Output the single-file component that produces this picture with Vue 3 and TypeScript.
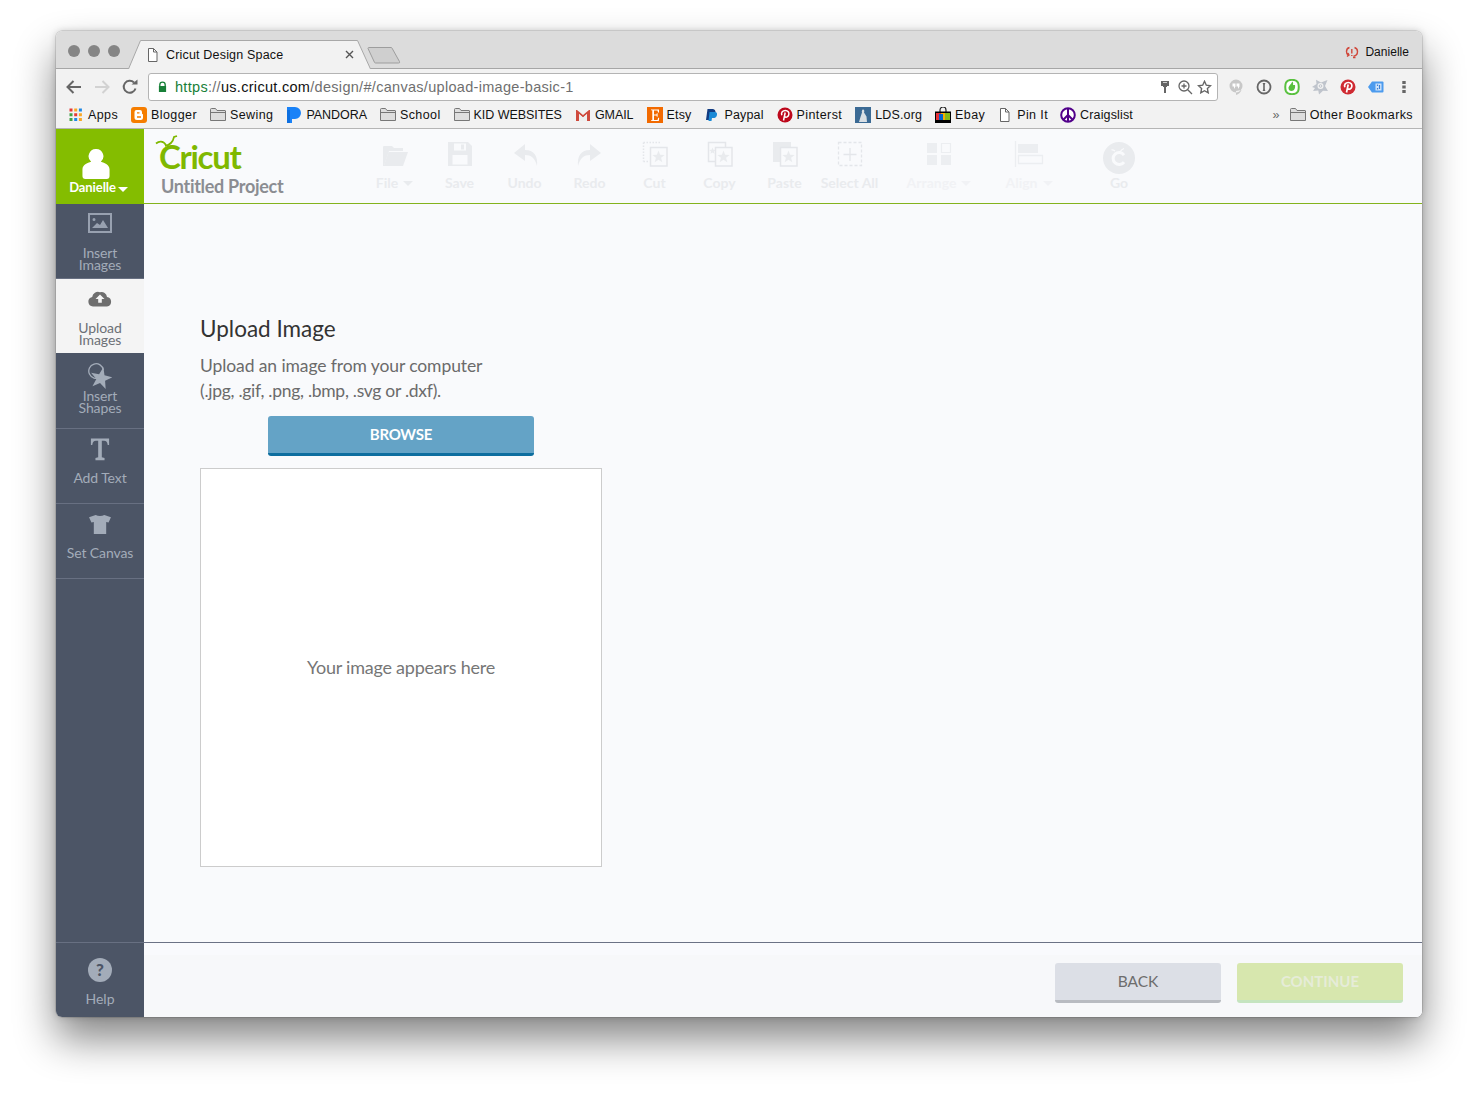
<script setup lang="ts">
interface P { d: string; fill?: string; stroke?: string; sw?: number; dash?: string }
interface Ic { w: number; h: number; box: string; p: P[] }

const rect = (x: number, y: number, w: number, h: number) => `M${x} ${y}h${w}v${h}h${-w}z`
const circ = (cx: number, cy: number, r: number) => `M${cx - r} ${cy}a${r} ${r} 0 1 0 ${2 * r} 0a${r} ${r} 0 1 0 ${-2 * r} 0z`
const starPath = (cx: number, cy: number, R: number, r: number, rot = 0) => {
  const pts: string[] = []
  for (let i = 0; i < 10; i++) {
    const a = ((-90 + rot + i * 36) * Math.PI) / 180
    const q = i % 2 ? r : R
    pts.push(`${(cx + q * Math.cos(a)).toFixed(2)} ${(cy + q * Math.sin(a)).toFixed(2)}`)
  }
  return 'M' + pts.join('L') + 'z'
}

const folderPaths: P[] = [{ d: 'M.5 13.500V2.500a1 1 0 0 1 1-1h4l1.500 2h8a.5.5 0 0 1 .5.5v9.500z', fill: '#dedede', stroke: '#777', sw: 1 }, { d: 'M.5 5.500h15.500', stroke: '#777', sw: 1 }]
const docPaths: P[] = [{ d: 'M1.500.5h5l3.500 3.500v9.500h-8.500z', fill: '#fff', stroke: '#666', sw: 1 }, { d: 'M6.500.5v3.500h3.500', fill: 'none', stroke: '#666', sw: 1 }]

const s16 = (p: P[]): Ic => ({ w: 16, h: 16, box: '0 0 16 16', p })

const appColors = ['#e53935', '#f9a825', '#1e88e5', '#43a047', '#e53935', '#f9a825', '#43a047', '#1e88e5', '#f9a825']
const appsIcon = s16(appColors.map((c, i) => ({ d: rect(1.500 + (i % 3) * 4.700, 1.500 + Math.floor(i / 3) * 4.700, 3, 3), fill: c })))

const bookmarks: { label: string; icon: Ic; cls?: string }[] = [
  { label: 'Apps', icon: appsIcon },
  { label: 'Blogger', icon: s16([{ d: 'M3 0h10a3 3 0 0 1 3 3v10a3 3 0 0 1-3 3H3a3 3 0 0 1-3-3V3a3 3 0 0 1 3-3z', fill: '#f57d00' }, { d: 'M5.500 3h3.500a2 2 0 0 1 2 2v1.500a.7.7 0 0 0 .7.7h.3v3.300a2.500 2.500 0 0 1-2.500 2.500H6a2.500 2.500 0 0 1-2.500-2.500V5a2 2 0 0 1 2-2z', fill: '#fff' }, { d: 'M6 5.800h2.500M6 10h4', stroke: '#f57d00', sw: 1.300 }]) },
  { label: 'Sewing', icon: s16(folderPaths) },
  { label: 'PANDORA', cls: 'caps', icon: s16([{ d: 'M1 0h8a6 6 0 0 1 0 12H6v4H1z', fill: '#1a82f7' }, { d: 'M1 12V3h3v13H1z', fill: '#0d6fe0' }]) },
  { label: 'School', icon: s16(folderPaths) },
  { label: 'KID WEBSITES', cls: 'caps', icon: s16(folderPaths) },
  { label: 'GMAIL', cls: 'caps', icon: s16([{ d: 'M1 3v11h3V7l4 3.500L12 7v7h3V3h-1L8 8 2 3z', fill: '#cf4a3d' }, { d: 'M4 7l4 3.500L12 7v7H4z', fill: '#eeeeee' }]) },
  { label: 'Etsy', cls: 'tight', icon: s16([{ d: rect(0, 0, 16, 16), fill: '#f26a00' }, { d: 'M4 2.500h8v3h-1l-.5-2H7v4h2.500l.3-1.300h.8v3.600h-.8l-.3-1.300H7v4.500h3.500l.7-2.200h1L11.800 14H4v-.8h1.300V3.300H4z', fill: '#fff' }]) },
  { label: 'Paypal', cls: 'tight', icon: s16([{ d: 'M3.500 2h5a3 3 0 0 1 3 3.500C11 8 9 9 7 9H5.500L5 13H2z', fill: '#123c82' }, { d: 'M5.500 5h5.500a2.500 2.500 0 0 1 2 3c-.5 2.500-2 3-4 3H8l-.5 3h-3z', fill: '#1b8ad6' }]) },
  { label: 'Pinterst', icon: s16([{ d: circ(8, 8, 7.500), fill: '#bd081c' }, { d: 'M6.500 13.500l1.700-8M4.800 8.200c-1-2.700 1-4.700 3.500-4.700 2.700 0 4 1.900 3.500 4.100-.4 2.200-2.600 3.400-4.200 2', fill: 'none', stroke: '#fff', sw: 1.500 }]) },
  { label: 'LDS.org', cls: 'tight', icon: s16([{ d: rect(0, 0, 16, 16), fill: '#3b6a94' }, { d: 'M8 2.500c1.500 0 1.500 2 1 3l2.500 4L12 15H4l1.500-5L7 5.500c-.5-1 0-3 1-3z', fill: '#d9dfe4' }]) },
  { label: 'Ebay', icon: s16([{ d: 'M5 5V3a3 3 0 0 1 6 0v2', fill: 'none', stroke: '#222', sw: 1.200 }, { d: rect(0, 4.500, 16, 11.500), fill: '#000' }, { d: rect(1, 6, 5, 7), fill: '#e53238' }, { d: rect(6, 6, 4, 7), fill: '#f5af02' }, { d: rect(10, 6, 5, 7), fill: '#86b817' }, { d: rect(4, 7, 4, 6), fill: '#0064d2' }]) },
  { label: 'Pin It', cls: 'pin', icon: { w: 11, h: 14, box: '0 0 11 14', p: docPaths } },
  { label: 'Craigslist', cls: 'tight', icon: s16([{ d: circ(8, 8, 6.800), fill: '#fff', stroke: '#51008a', sw: 2 }, { d: 'M8 1.500v13M8 8l-4.700 4.700M8 8l4.700 4.700', fill: 'none', stroke: '#51008a', sw: 2 }]) },
]
const otherIcon = s16(folderPaths)

const ext: Ic[] = [
  s16([{ d: circ(8, 7, 6.500) + 'M8 12v4c2.500-.8 4.500-2.500 5.500-5z', fill: '#c8c8c8' }, { d: 'M4.500 4.500h3v3l-1.500 2.500V7.500H4.500zM8.500 4.500h3v3l-1.500 2.500V7.500H8.500z', fill: '#fff' }]),
  s16([{ d: circ(8, 8, 6.500), fill: 'none', stroke: '#666', sw: 1.800 }, { d: 'M6.800 4h2.400v1l-.4.400v5.200l.4.400v1H6.800v-1l.4-.4V5.400l-.4-.4z', fill: '#666' }]),
  s16([{ d: 'M8 .8c3 0 4.800.8 6 2.800 1 2 1 6.800 0 8.800-1.200 2-3 2.800-6 2.800s-4.800-.8-6-2.800c-1-2-1-6.800 0-8.800C3.200 1.600 5 .8 8 .8z', fill: '#fff', stroke: '#59c13f', sw: 2 }, { d: 'M4.500 9c0-2 2.200-3 3.800-6.500 1 1 1 2.500.7 3.500h2c.5 2.500-.5 6-3.500 6-2 0-3-1.300-3-3z', fill: '#59c13f' }]),
  s16([{ d: 'M0 8l4.500-3L4 .8l5 2.700L15.500 1 13 7l3 5-5-.3L7 15.500 6.300 11.500 1 12l2-3z', fill: '#bfc4cc' }, { d: circ(8.500, 7, 3), fill: '#f2f2f2' }, { d: circ(8.500, 7, 1.300), fill: 'none', stroke: '#bfc4cc', sw: 1 }]),
  s16([{ d: circ(8, 8, 7.500), fill: '#cf2a32' }, { d: 'M6.500 13.500l1.700-8M4.800 8.200c-1-2.700 1-4.700 3.500-4.700 2.700 0 4 1.900 3.500 4.100-.4 2.200-2.600 3.400-4.200 2', fill: 'none', stroke: '#fff', sw: 1.700 }]),
  s16([{ d: 'M4 2.500h10.500a1 1 0 0 1 1 1v9a1 1 0 0 1-1 1H4L0 8z', fill: '#4c9bee' }, { d: rect(7.500, 4.500, 6, 7), fill: '#cfe3fa' }, { d: 'M9.500 5.500v1.500M9.500 9v1.500M11.500 6v4', stroke: '#3b82d8', sw: 1.200 }]),
]

const faint = '#e9ebee'
const faintLine = '#e4e6ea'
const bg = '#f9fafc'
const star = starPath(20.500, 17, 6.500, 2.700)
const tb = (p: P[]): Ic => ({ w: 34, h: 28, box: '0 0 34 28', p })
const front: P = { d: rect(12.500, 7.500, 16.500, 18.500), fill: bg, stroke: faintLine, sw: 1.500 }

const tools: { label: string; caret?: boolean; cls?: string; icon: Ic }[] = [
  { label: 'File', caret: true, icon: tb([{ d: 'M5 7a1 1 0 0 1 1-1h8l2 2h9v3H11l-5 15H5z', fill: faint }, { d: 'M10.500 12H30l-5 14H5.800z', fill: faint }]) },
  { label: 'Save', icon: tb([{ d: 'M5 2h20l4 4v20H5zM11 3.500v7h12v-7zM18 4.500v5h3v-5zM9.500 15v9.500h15V15z', fill: faint }]) },
  { label: 'Undo', icon: tb([{ d: 'M17 4L6 13l11 8v-6c6 0 10 3 12 11 1-10-3-16-12-16z', fill: faint }]) },
  { label: 'Redo', icon: tb([{ d: 'M17 4l11 9-11 8v-6c-6 0-10 3-12 11-1-10 3-16 12-16z', fill: faint }]) },
  { label: 'Cut', icon: tb([{ d: 'M5.500 2.500h18M5.500 2.500v19M5.500 21.500h6', fill: 'none', stroke: faintLine, sw: 1.500, dash: '1.500 1.500' }, front, { d: star, fill: faint }]) },
  { label: 'Copy', icon: tb([{ d: rect(5.500, 2.500, 17, 19), fill: 'none', stroke: faintLine, sw: 1.500 }, { d: starPath(9.500, 11, 3.500, 1.500), fill: faint }, front, { d: star, fill: faint }]) },
  { label: 'Paste', icon: tb([{ d: rect(5, 2, 18, 20), fill: faint }, front, { d: star, fill: faint }]) },
  { label: 'Select All', icon: tb([{ d: rect(5.500, 2.500, 23, 23), fill: 'none', stroke: faintLine, sw: 1.300, dash: '3 2' }, { d: 'M17 8v13M10.500 14.500h13', stroke: faintLine, sw: 1.300 }]) },
  { label: 'Arrange', caret: true, cls: 'wide lighter gapl', icon: tb([{ d: rect(5, 3, 10, 10) + rect(5, 15, 10, 10) + rect(19, 15, 10, 10), fill: '#eceef1' }, { d: rect(19.500, 3.500, 9, 9), fill: 'none', stroke: '#eceef1', sw: 1.200 }]) },
  { label: 'Align', caret: true, cls: 'wide lighter', icon: tb([{ d: 'M3.500 1v26', stroke: '#eceef1', sw: 1.300 }, { d: rect(6, 4, 20, 9), fill: '#eceef1' }, { d: rect(6.500, 15.500, 24, 8), fill: 'none', stroke: '#eceef1', sw: 1.300 }]) },
]

const nav: { t: string[]; cls: string; icon: Ic }[] = [
  { t: ['Insert', 'Images'], cls: 'images', icon: { w: 24, h: 20, box: '0 0 24 20', p: [{ d: rect(1, 1, 22, 18), fill: 'none', stroke: '#98a1b0', sw: 2 }, { d: circ(6, 6.500, 1.500) + 'M4 15l5-5 3 2 3-5 5 8z', fill: '#98a1b0' }] } },
  { t: ['Upload', 'Images'], cls: 'active', icon: { w: 24, h: 18, box: '0 0 24 18', p: [{ d: 'M5 17.500a4.800 4.800 0 0 1-.8-9.500A5.800 5.800 0 0 1 12 3.200a5.500 5.500 0 0 1 7 4.800 4.800 4.800 0 0 1 0 9.500z', fill: '#6e6e6e' }, { d: 'M12 5.500l4.500 4.500h-2.700v3.800h-3.600V10H7.500z', fill: '#f4f4f4' }] } },
  { t: ['Insert', 'Shapes'], cls: 'shapes', icon: { w: 24, h: 28, box: '0 0 24 28', p: [{ d: 'M12 15.200A7.300 7.300 0 1 1 15.300 8', fill: 'none', stroke: '#a3acb9', sw: 1.300 }, { d: starPath(13, 16.500, 11.500, 4.700, 12), fill: '#a3acb9' }] } },
  { t: ['Add Text'], cls: 'text', icon: { w: 20, h: 24, box: '0 0 22 25', p: [{ d: 'M1 1h20v7h-1.500c-.5-3-1.500-4.500-4-4.500h-2.500v18l3 1V25H6v-2.500l3-1v-18H6.500c-2.500 0-3.500 1.500-4 4.500H1z', fill: '#a3acb9' }] } },
  { t: ['Set Canvas'], cls: 'canvas', icon: { w: 24, h: 20, box: '0 0 24 21', p: [{ d: 'M7.500 1c2.500 1.500 6.500 1.500 9 0l7 2.500-2.500 5.500-2.500-.5V21H5.500V8.500L3 9 .5 3.500z', fill: '#a3acb9' }] } },
]
</script>

<template>
  <div class="page">
    <div class="win">
      <div class="titlebar">
        <div class="lights"><i></i><i></i><i></i></div>
        <div class="tab">
          <svg class="tab-shape" width="244" height="29" viewBox="0 0 244 29"><path d="M.5 29L12.500.5h217l13 28.500" fill="#f2f2f2" stroke="#a8a8a8"/></svg>
          <svg class="tab-doc" width="11" height="14" viewBox="0 0 11 14"><path v-for="(p, i) in docPaths" :key="i" :d="p.d" :fill="p.fill" :stroke="p.stroke"/></svg>
          <span class="tab-title">Cricut Design Space</span>
          <svg class="tab-x" width="9" height="9" viewBox="0 0 9 9"><path d="M1 1l7 7M8 1L1 8" stroke="#555" stroke-width="1.400"/></svg>
        </div>
        <svg class="newtab" width="34" height="17" viewBox="0 0 34 17"><path d="M1 1.500a1 1 0 0 1 1-1h22a1 1 0 0 1 1 .6l7.500 13.500a1 1 0 0 1-1 1.400H8.500a1 1 0 0 1-1-.6z" fill="#cfcfcf" stroke="#9d9d9d"/></svg>
        <div class="profile">
          <svg width="14" height="13" viewBox="0 0 14 13"><path d="M4.500 1.500C2.500 2 1.500 3.500 1.500 5.500c0 1.500.6 2.600 1.500 3.400M2 10.500L4 9 3 7M9.500 1.500c2 .7 3 2.200 3 4 0 2.500-1.700 4.300-4 4.600M8 11.500h2.500M6.800 3v4.500M6.800 9v1" fill="none" stroke="#d0473a" stroke-width="1.400"/></svg>
          <span>Danielle</span>
        </div>
      </div>

      <div class="toolbar">
        <svg class="nav-b b1" width="16" height="14" viewBox="0 0 16 14"><path d="M15 7H2M7.500 1L1.500 7l6 6" fill="none" stroke="#666" stroke-width="2"/></svg>
        <svg class="nav-b b2" width="16" height="14" viewBox="0 0 16 14"><path d="M1 7h13M8.500 1l6 6-6 6" fill="none" stroke="#d2d2d2" stroke-width="2"/></svg>
        <svg class="nav-b b3" width="16" height="16" viewBox="0 0 16 16"><path d="M13.500 9.500A6 6 0 1 1 12 3.500" fill="none" stroke="#666" stroke-width="2"/><path d="M9.500 5.500h6v-5z" fill="#666"/></svg>
        <div class="omnibox">
          <svg width="9" height="12" viewBox="0 0 10 12"><path d="M2 5V3.500a3 3 0 0 1 6 0V5" fill="none" stroke="#188038" stroke-width="1.500"/><path d="M1 5h8v6.500H1z" fill="#188038"/></svg>
          <span class="url"><span class="g">https</span><span class="d">://</span><span class="b">us.cricut.com</span><span class="d">/design/#/canvas/upload-image-basic-1</span></span>
          <svg class="o1" width="10" height="14" viewBox="0 0 10 14"><path d="M1 1h8v5H7v1H6v6H4V7H3V6H1z" fill="#666"/><path d="M3 2.500h4" stroke="#ccc"/></svg>
          <svg class="o2" width="15" height="15" viewBox="0 0 15 15"><path d="M9.500 9.500L14 14M6 1a5 5 0 1 0 0 10A5 5 0 0 0 6 1zM3.500 6h5M6 3.500v5" fill="none" stroke="#666" stroke-width="1.300"/></svg>
          <svg class="o3" width="15" height="14" viewBox="0 0 15 14"><path d="M7.500 1.300l1.800 3.900 4.200.5-3.100 2.900.8 4.200-3.700-2.100-3.700 2.100.8-4.200-3.100-2.900 4.200-.5z" fill="none" stroke="#666" stroke-width="1.400"/></svg>
        </div>
        <div class="exts">
          <svg v-for="(e, i) in ext" :key="i" :width="e.w" :height="e.h" :viewBox="e.box"><path v-for="(p, j) in e.p" :key="j" :d="p.d" :fill="p.fill ?? 'none'" :stroke="p.stroke" :stroke-width="p.sw"/></svg>
          <svg class="dots" width="4" height="14" viewBox="0 0 4 14"><path d="M.3 1h3.400v3H.3zM.3 5.500h3.400v3H.3zM.3 10h3.400v3H.3z" fill="#666"/></svg>
        </div>
      </div>

      <div class="bookmarks">
        <div v-for="b in bookmarks" :key="b.label" class="bm" :class="b.cls">
          <svg :width="b.icon.w" :height="b.icon.h" :viewBox="b.icon.box"><path v-for="(p, j) in b.icon.p" :key="j" :d="p.d" :fill="p.fill ?? 'none'" :stroke="p.stroke" :stroke-width="p.sw"/></svg>
          <span>{{ b.label }}</span>
        </div>
        <span class="more">»</span>
        <div class="bm">
          <svg :width="otherIcon.w" :height="otherIcon.h" :viewBox="otherIcon.box"><path v-for="(p, j) in otherIcon.p" :key="j" :d="p.d" :fill="p.fill ?? 'none'" :stroke="p.stroke" :stroke-width="p.sw"/></svg>
          <span>Other Bookmarks</span>
        </div>
      </div>

      <div class="app">
        <aside class="side">
          <div class="user">
            <svg width="28" height="30" viewBox="0 0 28 31"><path d="M14 0a7.500 7.500 0 0 1 5 13.200c4 1.300 9 3 9 8V28a3 3 0 0 1-3 3H3a3 3 0 0 1-3-3v-6.800c0-5 5-6.700 9-8A7.500 7.500 0 0 1 14 0z" fill="#fff"/></svg>
            <div class="uname">Danielle<i class="caret"></i></div>
          </div>
          <div v-for="n in nav" :key="n.t[0] + n.t[1]" class="nav" :class="n.cls">
            <svg :width="n.icon.w" :height="n.icon.h" :viewBox="n.icon.box"><path v-for="(p, j) in n.icon.p" :key="j" :d="p.d" :fill="p.fill ?? 'none'" :stroke="p.stroke" :stroke-width="p.sw"/></svg>
            <div class="nl"><div v-for="l in n.t" :key="l">{{ l }}</div></div>
          </div>
          <div class="help">
            <div class="q">?</div>
            <div class="hl">Help</div>
          </div>
        </aside>

        <div class="main">
          <header class="head">
            <div class="brand">
              <div class="logo">
                <svg class="ant" width="30" height="20" viewBox="0 0 30 20"><path d="M1 8.500c3-2.500 7-3 10 1.500M10 11c5-1 8-4 9-9l3-1" fill="none" stroke="#7fb800" stroke-width="1.700"/></svg>
                <span>Cricut</span>
              </div>
              <div class="proj">Untitled Project</div>
            </div>
            <div class="tools">
              <div v-for="t in tools" :key="t.label" class="tool" :class="t.cls">
                <svg :width="t.icon.w" :height="t.icon.h" :viewBox="t.icon.box"><path v-for="(p, j) in t.icon.p" :key="j" :d="p.d" :fill="p.fill ?? 'none'" :stroke="p.stroke" :stroke-width="p.sw" :stroke-dasharray="p.dash"/></svg>
                <div class="tl">{{ t.label }}<i v-if="t.caret" class="tcaret"></i></div>
              </div>
              <div class="tool wide go">
                <svg width="32" height="32" viewBox="0 0 32 32"><circle cx="16" cy="16" r="16" fill="#e9ebee"/><path d="M21 13a6 6 0 1 0 0 7" fill="none" stroke="#f9fafc" stroke-width="3"/><path d="M12 9c-1.500-1-2.500-1.500-3.500-1M17 10c1-2 2.500-3 4-3.500" fill="none" stroke="#f9fafc" stroke-width="1.300"/></svg>
                <div class="tl">Go</div>
              </div>
            </div>
          </header>

          <section class="body">
            <h1>Upload Image</h1>
            <p>Upload an image from your computer<br><span>(.jpg, .gif, .png, .bmp, .svg or .dxf).</span></p>
            <div class="browse-row"><button class="browse">BROWSE</button></div>
            <div class="preview">Your image appears here</div>
          </section>

          <footer class="foot">
            <button class="btn back">BACK</button>
            <button class="btn cont">CONTINUE</button>
          </footer>
        </div>
      </div>
    </div>
  </div>
</template>

<style scoped>
path { fill-rule: evenodd; }
.page { width: 1478px; height: 1097px; box-sizing: border-box; padding: 31px 0 80px 56px; background: #fff; overflow: hidden; }
.win { width: 1366px; height: 986px; border-radius: 6px; overflow: hidden; display: flex; flex-direction: column; box-shadow: 0 22px 40px rgba(0,0,0,.48), 0 0 7px rgba(0,0,0,.18), 0 0 0 .5px rgba(0,0,0,.2); font-family: "Liberation Sans", Arial, sans-serif; color: #111; }

.titlebar { height: 38px; flex: none; box-sizing: border-box; background: #dcdcdc; border-bottom: 1px solid #a6a6a6; display: flex; align-items: flex-end; position: relative; }
.lights { display: flex; gap: 8px; margin: 0 0 11px 12px; }
.lights i { width: 12px; height: 12px; border-radius: 50%; background: #858585; display: block; }
.tab { position: relative; width: 242px; height: 29px; margin: 0 0 -1px 8px; display: flex; align-items: center; font-size: 12.500px; }
.tab-shape { position: absolute; left: 0; top: 0; }
.tab-doc { position: relative; margin-left: 19px; }
.tab-title { position: relative; margin-left: 8px; letter-spacing: .18px; }
.tab-x { position: relative; margin-left: 62px; }
.newtab { margin: 0 0 4px -3px; }
.profile { margin: 0 13px 9px auto; display: flex; align-items: center; gap: 6px; font-size: 12px; letter-spacing: .03px; }

.toolbar { height: 33px; flex: none; box-sizing: border-box; padding-top: 4px; background: #f2f2f2; display: flex; align-items: flex-start; }
.nav-b { flex: none; margin-top: 7px; }
.nav-b.b1 { margin-left: 10px; }
.nav-b.b2 { margin-left: 12px; }
.nav-b.b3 { margin-left: 12px; margin-top: 6px; }
.omnibox { margin-left: 10px; width: 1070px; height: 28px; box-sizing: border-box; background: #fff; border: 1px solid #b4b4b4; border-radius: 3px; display: flex; align-items: center; padding-left: 9px; }
.url { margin-left: 8px; font-size: 14.500px; letter-spacing: .3px; white-space: nowrap; }
.url .g { color: #188038; }
.url .d { color: #6f6f6f; }
.url .b { color: #111; }
.o1 { margin-left: auto; }
.o2 { margin-left: 8px; }
.o3 { margin-left: 4px; margin-right: 5px; }
.exts { display: flex; align-items: center; height: 28px; margin-left: 10px; }
.exts svg { margin-right: 12px; }
.exts svg.dots { margin: 0 0 0 6px; }

.bookmarks { height: 27px; flex: none; box-sizing: border-box; background: #f2f2f2; border-bottom: 1px solid #b5b5b5; display: flex; align-items: center; padding: 0 9px 0 12px; font-size: 12.500px; letter-spacing: .4px; white-space: nowrap; }
.bm { display: flex; align-items: center; gap: 4px; margin-right: 13px; }
.bm:last-child { margin-right: 0; }
.bm.caps { letter-spacing: -.05px; }
.bm.tight { letter-spacing: .15px; }
.bm.pin { gap: 7px; margin-left: 1px; margin-right: 12px; }
.more { margin: 0 10px 0 auto; color: #666; }

.app { flex: 1; display: flex; min-height: 0; font-family: Lato, sans-serif; }
.side { width: 88px; flex: none; background: #4c5566; display: flex; flex-direction: column; color: #a3acb9; font-size: 14px; }
.user { height: 75px; flex: none; background: #84bd00; color: #fff; display: flex; flex-direction: column; align-items: center; padding-top: 20px; box-sizing: border-box; }
.user svg { margin-left: -8px; }
.uname { font-size: 13px; line-height: 16px; font-weight: 700; display: flex; align-items: center; letter-spacing: -.1px; margin-left: -3px; }
.caret { width: 0; height: 0; border: 5px solid transparent; border-top-color: #fff; border-bottom: 0; margin: 4px 0 0 2px; }
.nav { height: 75px; flex: none; box-sizing: border-box; border-bottom: 1px solid #687082; display: flex; flex-direction: column; align-items: center; text-align: center; line-height: 12px; letter-spacing: -.1px; }
.nav svg { flex: none; }
.nav.images { padding-top: 9px; }
.nav.images .nl { margin-top: 14px; }
.nav.active { background: #f4f4f4; color: #6c7076; height: 74px; padding-top: 10px; border-bottom: 0; }
.nav.active .nl { margin-top: 15px; }
.nav.shapes { padding-top: 9px; height: 76px; }
.nav.text { padding-top: 8px; line-height: 16px; }
.nav.text .nl { margin-top: 9px; }
.nav.canvas { padding-top: 10px; line-height: 16px; }
.nav.canvas .nl { margin-top: 11px; }
.help { margin-top: auto; height: 75px; box-sizing: border-box; border-top: 1px solid #687082; display: flex; flex-direction: column; align-items: center; padding-top: 15px; }
.q { width: 24px; height: 24px; border-radius: 50%; background: #a3acb9; color: #4c5566; font-weight: 900; font-size: 17px; line-height: 24px; text-align: center; margin-bottom: 8px; }
.hl { line-height: 17px; }

.main { flex: 1; min-width: 0; display: flex; flex-direction: column; background: #f9fafc; }
.head { height: 75px; flex: none; box-sizing: border-box; border-bottom: 1px solid #84b31c; display: flex; }
.brand { width: 218px; flex: none; position: relative; }
.logo { position: absolute; left: 15px; top: 6px; height: 42px; font-size: 33px; font-weight: 700; color: #7fb800; letter-spacing: -1.300px; line-height: 42px; }
.ant { position: absolute; left: -4px; top: 0; }
.proj { position: absolute; left: 17px; top: 45px; font-size: 18px; font-weight: 700; color: #8b8d92; white-space: nowrap; letter-spacing: -.3px; line-height: 24px; }
.tools { display: flex; }
.tool { width: 65px; display: flex; flex-direction: column; align-items: center; padding-top: 11px; color: #e9ebee; font-weight: 700; font-size: 14px; box-sizing: border-box; }
.tool svg { flex: none; }
.tl { margin-top: 6px; white-space: nowrap; line-height: 17px; display: flex; align-items: center; }
.tool.wide { width: 90px; }
.tool.gapl { margin-left: 12px; }
.tool.lighter { color: #f1f2f5; }
.tool.go { padding-top: 13px; }
.tool.go .tl { margin-top: 0; }
.tcaret { width: 0; height: 0; border: 5px solid transparent; border-top-color: currentColor; border-bottom: 0; margin: 2px 0 0 5px; }

.body { flex: 1; min-height: 0; padding: 111px 0 0 56px; border-bottom: 1px solid #6b7285; color: #6b6b6b; }
h1 { margin: 0; font-size: 22.500px; font-weight: 400; color: #333; line-height: 28px; }
p { margin: 10px 0 0; font-size: 17.500px; line-height: 25px; letter-spacing: -.1px; color: #6b6b6b; }
p span { letter-spacing: -.28px; }
.browse-row { width: 402px; display: flex; justify-content: center; margin-top: 13px; }
.browse { width: 266px; height: 40px; border: 0; border-bottom: 3px solid #0d6e9f; border-radius: 3px; background: #64a3c6; color: #fff; font: 700 15px Lato, sans-serif; padding: 0 0 1px; letter-spacing: -.2px; }
.preview { width: 402px; height: 399px; box-sizing: border-box; margin-top: 12px; padding-bottom: 2px; background: #fff; border: 1px solid #ccc; display: flex; align-items: center; justify-content: center; font-size: 18px; letter-spacing: -.23px; color: #767676; }

.foot { height: 74px; flex: none; box-sizing: border-box; display: flex; justify-content: flex-end; align-items: flex-start; gap: 16px; padding: 20px 19px 0 0; background: linear-gradient(#f9fafd 0 12px, #f7f8fa 12px); }
.btn { width: 166px; height: 40px; border: 0; border-radius: 3px; padding: 0 0 1px; font: 400 15.500px Lato, sans-serif; box-sizing: border-box; }
.back { background: #dcdfe6; border-bottom: 3px solid #b8bbc1; color: #6d6d6d; }
.cont { background: #d7e7ae; border-bottom: 3px solid #c5e4c0; color: #e6ecd8; font-weight: 700; font-size: 15px; }
</style>
